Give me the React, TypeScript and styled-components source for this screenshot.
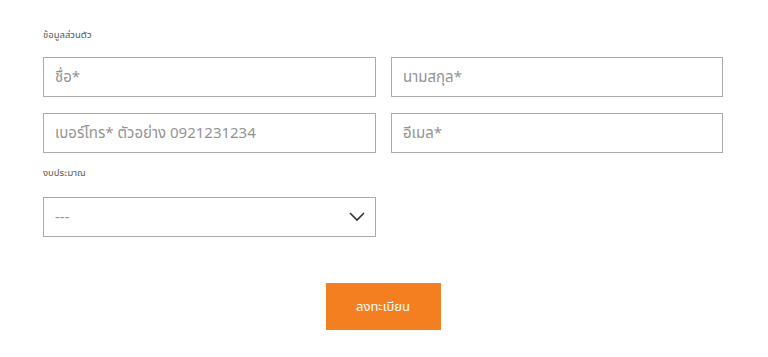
import React from "react";
import styled, { createGlobalStyle } from "styled-components";

const Global = createGlobalStyle`
  html, body { margin: 0; padding: 0; background: #fff; }
  body { font-family: "Noto Sans Thai", "Noto Sans Thai Looped", "Noto Sans", "DejaVu Sans", sans-serif; }
`;

const Form = styled.form`
  width: 680px;
  margin-left: 43px;
  padding-top: 27px;
  display: flex;
  flex-direction: column;
`;

const Label = styled.div<{ $mt: number }>`
  font-size: 9.5px;
  color: #555;
  line-height: 16px;
  height: 16px;
  margin-top: ${(p) => p.$mt}px;
`;

const Grid = styled.div`
  display: grid;
  grid-template-columns: 333px 332px;
  column-gap: 15px;
  row-gap: 16px;
  margin-top: 14px;
`;

const Input = styled.input`
  box-sizing: border-box;
  height: 40px;
  width: 100%;
  border: 1px solid #aaa;
  padding: 0 11px;
  font-family: inherit;
  font-size: 15px;
  color: #333;
  outline: none;
  background: #fff;
  &::placeholder { color: #939393; }
`;

const SelectWrap = styled.div`
  position: relative;
  width: 333px;
  margin-top: 16px;
`;

const Select = styled.select`
  box-sizing: border-box;
  appearance: none;
  width: 100%;
  height: 40px;
  border: 1px solid #aaa;
  background: #fff;
  padding: 0 11px;
  font-family: inherit;
  font-size: 15px;
  color: #939393;
  outline: none;
`;

const Chevron = styled.svg`
  position: absolute;
  right: 10px;
  top: 14px;
  pointer-events: none;
`;

const ButtonRow = styled.div`
  display: flex;
  justify-content: center;
  margin-top: 46px;
`;

const Submit = styled.button`
  width: 115px;
  height: 47px;
  border: none;
  background: #f47f20;
  color: #fff;
  font-family: inherit;
  font-size: 13px;
  cursor: pointer;
`;

export default function App() {
  return (
    <>
      <Global />
      <Form onSubmit={(e) => e.preventDefault()}>
        <Label $mt={0}>ข้อมูลส่วนตัว</Label>
        <Grid>
          <Input placeholder="ชื่อ*" />
          <Input placeholder="นามสกุล*" />
          <Input placeholder="เบอร์โทร* ตัวอย่าง 0921231234" />
          <Input placeholder="อีเมล*" />
        </Grid>
        <Label $mt={12}>งบประมาณ</Label>
        <SelectWrap>
          <Select defaultValue="">
            <option value="">---</option>
          </Select>
          <Chevron width="18" height="12" viewBox="0 0 18 12">
            <path d="M2 2 L9 9 L16 2" fill="none" stroke="#333" strokeWidth="1.6" />
          </Chevron>
        </SelectWrap>
        <ButtonRow>
          <Submit type="submit">ลงทะเบียน</Submit>
        </ButtonRow>
      </Form>
    </>
  );
}
